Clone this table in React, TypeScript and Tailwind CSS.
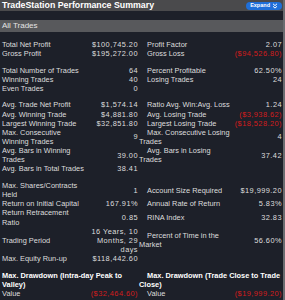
import React from 'react';

type Cell = { label: React.ReactNode; value?: React.ReactNode; red?: boolean };
type Row = { left: Cell; right?: Cell } | 'gap';

const ROWS: Row[] = [
  { left: { label: 'Total Net Profit', value: '$100,745.20' }, right: { label: 'Profit Factor', value: '2.07' } },
  { left: { label: 'Gross Profit', value: '$195,272.00' }, right: { label: 'Gross Loss', value: '($94,526.80)', red: true } },
  'gap',
  { left: { label: 'Total Number of Trades', value: '64' }, right: { label: 'Percent Profitable', value: '62.50%' } },
  { left: { label: 'Winning Trades', value: '40' }, right: { label: 'Losing Trades', value: '24' } },
  { left: { label: 'Even Trades', value: '0' } },
  'gap',
  { left: { label: 'Avg. Trade Net Profit', value: '$1,574.14' }, right: { label: 'Ratio Avg. Win:Avg. Loss', value: '1.24' } },
  { left: { label: 'Avg. Winning Trade', value: '$4,881.80' }, right: { label: 'Avg. Losing Trade', value: '($3,938.62)', red: true } },
  { left: { label: 'Largest Winning Trade', value: '$32,851.80' }, right: { label: 'Largest Losing Trade', value: '($18,528.20)', red: true } },
  {
    left: { label: <>Max. Consecutive<br />Winning Trades</>, value: '9' },
    right: { label: <>Max. Consecutive Losing<br />Trades</>, value: '4' },
  },
  {
    left: { label: <>Avg. Bars in Winning<br />Trades</>, value: '39.00' },
    right: { label: <>Avg. Bars in Losing<br />Trades</>, value: '37.42' },
  },
  { left: { label: 'Avg. Bars in Total Trades', value: '38.41' } },
  'gap',
  {
    left: { label: <>Max. Shares/Contracts<br />Held</>, value: '1' },
    right: { label: 'Account Size Required', value: '$19,999.20' },
  },
  { left: { label: 'Return on Initial Capital', value: '167.91%' }, right: { label: 'Annual Rate of Return', value: '5.83%' } },
  { left: { label: <>Return Retracement<br />Ratio</>, value: '0.85' }, right: { label: 'RINA Index', value: '32.83' } },
  {
    left: { label: 'Trading Period', value: <>16 Years, 10<br />Months, 29<br />days</> },
    right: { label: <>Percent of Time in the<br />Market</>, value: '56.60%' },
  },
  { left: { label: 'Max. Equity Run-up', value: '$118,442.60' } },
  'gap',
];

const ExpandIcon = () => (
  <svg width="6" height="6" viewBox="0 0 6 6" fill="none" stroke="white" strokeWidth="1">
    <path d="M1 0.8 L3 2.6 L5 0.8" />
    <path d="M1 3.3 L3 5.1 L5 3.3" />
  </svg>
);

export default function App() {
  return (
    <div
      className="w-[285px] h-[300px] overflow-hidden bg-[#1d2029] text-[#dedede] border-r-2 border-[#6a6c70] relative"
      style={{ fontFamily: '"Liberation Sans", Arial, sans-serif' }}
    >
      {/* Title bar */}
      <div className="h-[11px] bg-[#4a4a4c] flex items-center justify-between pl-[2px] pr-[1px]">
        <span className="text-[8.8px] font-bold text-white leading-none whitespace-nowrap">
          TradeStation Performance Summary
        </span>
        <span className="flex items-center gap-[2px] h-[8px] px-[4px] rounded-full bg-[#1f6fd8] text-white text-[5.5px] font-bold leading-none">
          Expand <ExpandIcon />
        </span>
      </div>

      <div className="h-[9px]" />

      {/* Section bar */}
      <div className="h-[12px] bg-[#58595c] flex items-center pl-[2px] text-[8px] text-[#e4e4e4] leading-none">
        All Trades
      </div>

      <table className="mt-[8px] w-[282px] table-fixed border-collapse text-[7.4px] leading-[9.15px]">
        <colgroup>
          <col className="w-[88px]" />
          <col className="w-[50px]" />
          <col className="w-[95px]" />
          <col className="w-[49px]" />
        </colgroup>
        <tbody>
          {ROWS.map((row, i) =>
            row === 'gap' ? (
              <tr key={i} className="h-[7.3px]">
                <td colSpan={4} />
              </tr>
            ) : (
              <tr key={i}>
                <td className="pl-[2px] p-0 align-middle whitespace-nowrap">{row.left.label}</td>
                <td
                  className={`p-0 align-middle text-right whitespace-nowrap tracking-[0.45px] ${row.left.red ? 'text-[#d41c1c]' : ''}`}
                >
                  {row.left.value}
                </td>
                <td className="pl-[1px] indent-[8px] align-middle whitespace-nowrap">{row.right?.label}</td>
                <td
                  className={`p-0 align-middle text-right whitespace-nowrap tracking-[0.45px] ${row.right?.red ? 'text-[#d41c1c]' : ''}`}
                >
                  {row.right?.value}
                </td>
              </tr>
            ),
          )}
          <tr>
            <td colSpan={2} className="pl-[2px] align-middle whitespace-nowrap font-bold text-white">
              Max. Drawdown (Intra-day Peak to
              <br />
              Valley)
            </td>
            <td colSpan={2} className="pl-[1px] indent-[8px] align-middle whitespace-nowrap font-bold text-white">
              Max. Drawdown (Trade Close to Trade
              <br />
              Close)
            </td>
          </tr>
          <tr>
            <td className="pl-[2px] align-middle">Value</td>
            <td className="align-middle text-right whitespace-nowrap tracking-[0.45px] text-[#d41c1c]">($32,464.60)</td>
            <td className="pl-[1px] indent-[8px] align-middle">Value</td>
            <td className="align-middle text-right whitespace-nowrap tracking-[0.45px] text-[#d41c1c]">($19,999.20)</td>
          </tr>
        </tbody>
      </table>
    </div>
  );
}
